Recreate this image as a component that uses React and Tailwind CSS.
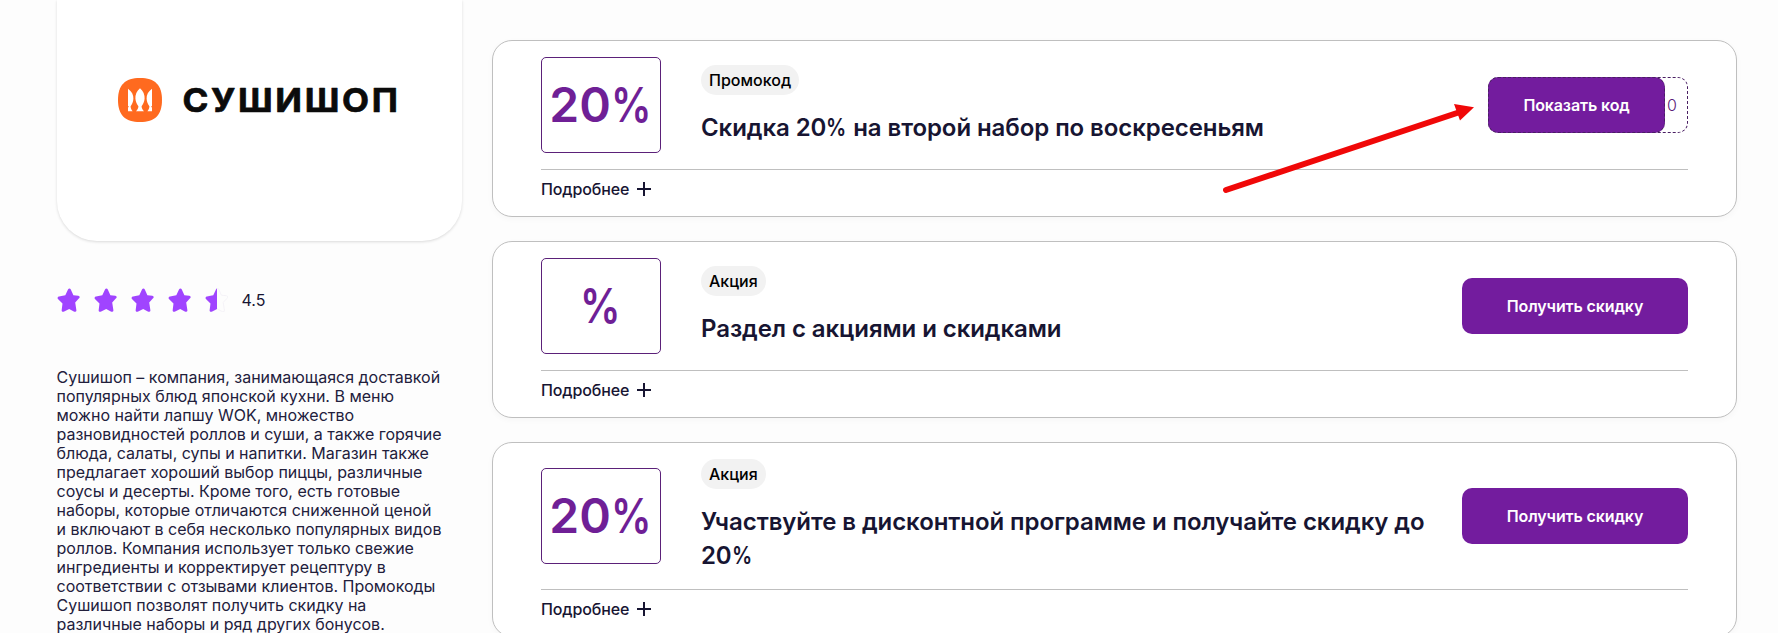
import React from "react";

const DESCRIPTION = [
  "Сушишоп – компания, занимающаяся доставкой",
  "популярных блюд японской кухни. В меню",
  "можно найти лапшу WOK, множество",
  "разновидностей роллов и суши, а также горячие",
  "блюда, салаты, супы и напитки. Магазин также",
  "предлагает хороший выбор пиццы, различные",
  "соусы и десерты. Кроме того, есть готовые",
  "наборы, которые отличаются сниженной ценой",
  "и включают в себя несколько популярных видов",
  "роллов. Компания использует только свежие",
  "ингредиенты и корректирует рецептуру в",
  "соответствии с отзывами клиентов. Промокоды",
  "Сушишоп позволят получить скидку на",
  "различные наборы и ряд других бонусов.",
];

const OFFERS = [
  { value: "20%", tag: "Промокод", title: "Скидка 20% на второй набор по воскресеньям", code: true },
  { value: "%", tag: "Акция", title: "Раздел с акциями и скидками" },
  { value: "20%", tag: "Акция", title: "Участвуйте в дисконтной программе и получайте скидку до 20%" },
];

const STAR =
  "M12.4 0.4 Q13.3 0.4 13.8 1.4 L16.4 7.2 L21.3 7.7 Q23 8 22.6 9.4 Q22.5 10 21.8 10.6 L18.2 14.4 L19.4 22.2 Q19.6 23.8 18 23.8 Q17.4 23.8 16.8 23.4 L12.2 20.9 L7.2 23.4 Q5.6 24.3 4.9 23.2 Q4.6 22.8 4.7 22.1 L5.5 15.6 L1.2 11.3 Q0.2 10.2 0.8 9.2 Q1 8.6 2 8.4 L8.3 7.3 L11 1.5 Q11.6 0.4 12.4 0.4 Z";

function Star({ half }) {
  return (
    <svg width="23" height="24" viewBox="0 0 23 24" className="block">
      {half ? (
        <>
          <path d={STAR} fill="#fdfdfd" stroke="#f3f0f6" strokeWidth="0.8" />
          <svg width="12" height="24" viewBox="0 0 12 24">
            <path d={STAR} fill="#a044ff" />
          </svg>
        </>
      ) : (
        <path d={STAR} fill="#a044ff" />
      )}
    </svg>
  );
}

function Logo() {
  return (
    <svg width="282" height="46" viewBox="0 0 282 46" className="block">
      <path
        d="M22 1 C37 1 44 8 44 23 C44 38 37 45 22 45 C7 45 0 38 0 23 C0 8 7 1 22 1 Z"
        fill="#ff6a1f"
      />
      <g fill="#ffffff">
        <path d="M22 11.3 C25.2 14 27 18 26.6 21.8 C26.3 25 25 27.5 23.6 29.2 C23.6 31 24.4 32.6 26 34.2 L18 34.2 C19.6 32.6 20.4 31 20.4 29.2 C19 27.5 17.7 25 17.4 21.8 C17 18 18.8 14 22 11.3 Z" />
        <path d="M10 11.8 C13.8 14.4 15.6 18 15.4 21.8 C15.2 25 14 27.6 12.6 29.2 C12.6 31 13.2 32.6 14.6 34.2 L10 34.2 L10 30.6 L11 29.8 L10 29 Z" />
        <path d="M34 11.8 C30.2 14.4 28.4 18 28.6 21.8 C28.8 25 30 27.6 31.4 29.2 C31.4 31 30.8 32.6 29.4 34.2 L34 34.2 L34 30.6 L33 29.8 L34 29 Z" />
      </g>
      <text
        x="64.5"
        y="34.5"
        textLength="218"
        lengthAdjust="spacingAndGlyphs"
        className="font-['Inter',sans-serif] text-[33px] font-bold tracking-[2.5px]"
        fill="#0b0b0b"
        stroke="#0b0b0b"
        strokeWidth="0.7"
        strokeLinejoin="round"
      >
        СУШИШОП
      </text>
    </svg>
  );
}

// Renders text with a condensed percent sign.
function Condensed({ children }) {
  const [before, after] = children.split("%");
  if (after === undefined) return children;
  return (
    <>
      {before}
      <span className="-mr-[0.13em] inline-block origin-left scale-x-[0.84]">%</span>
      {after}
    </>
  );
}

function Offer({ value, tag, title, code }) {
  return (
    <article className="rounded-[20px] border border-[#bfbfbf] bg-white px-12 shadow-[0_2px_6px_rgba(0,0,0,0.03)]">
      <div className="flex items-center border-b border-[#bfbfbf] py-4">
        <div className="flex h-24 w-[120px] shrink-0 items-center justify-center rounded-[5px] border border-[#5b2179] text-5xl font-semibold text-[#6f1f96]">
          <div>
            <Condensed>{value}</Condensed>
          </div>
        </div>
        <div className="ml-10 flex flex-1 flex-col items-start gap-4">
          <span className="flex h-[30px] items-center rounded-full bg-[#f2f2f2] px-2 text-base font-medium text-black">
            {tag}
          </span>
          <h2 className="text-2xl leading-[33.6px] font-semibold tracking-[-0.08px] text-[#171532]">
            <Condensed>{title}</Condensed>
          </h2>
        </div>
        {code ? (
          <div className="ml-6 flex h-14 w-[200px] shrink-0 rounded-[10px] border border-dashed border-[#4a1f63]">
            <button className="-my-px -ml-px w-[177px] rounded-[10px] border border-dashed border-[#4a1f63] bg-[#731c9e] text-base font-semibold tracking-[-0.12px] text-white">
              Показать код
            </button>
            <span className="flex items-center pl-0.5 text-base font-light text-[#5b2179]">0</span>
          </div>
        ) : (
          <button className="ml-6 h-14 w-[226px] shrink-0 rounded-[10px] bg-[#731c9e] text-base font-semibold tracking-[-0.12px] text-white">
            Получить скидку
          </button>
        )}
      </div>
      <div className="flex items-center gap-2 pt-2 pb-4 text-base leading-[22.4px] font-medium tracking-[-0.12px] text-[#171532]">
        Подробнее
        <svg width="14" height="14" viewBox="0 0 14 14">
          <path d="M7 0V14M0 7H14" stroke="#171532" strokeWidth="2" />
        </svg>
      </div>
    </article>
  );
}

export default function App() {
  return (
    <div className="relative flex h-[633px] w-[1778px] overflow-hidden bg-[#fdfdfd] font-['Inter',sans-serif] text-[#171532]">
      <aside className="ml-[56.5px] w-[405.5px] shrink-0">
        <div className="flex h-[241px] justify-center rounded-b-[40px] bg-white pt-[76.5px] shadow-[0_1px_3px_rgba(0,0,0,0.14)]">
          <Logo />
        </div>
        <div className="mt-[47px] flex h-6 items-center gap-3.5">
          <Star />
          <Star />
          <Star />
          <Star />
          <Star half />
          <span className="text-base">4.5</span>
        </div>
        <p className="mt-14 text-base leading-[19px] font-normal tracking-[-0.01px] whitespace-nowrap text-[#22203c]">
          {DESCRIPTION.map((line) => (
            <span key={line} className="block">
              {line}
            </span>
          ))}
        </p>
      </aside>
      <main className="mt-[39.6px] ml-[30px] flex w-[1245px] shrink-0 flex-col gap-6">
        {OFFERS.map((offer) => (
          <Offer key={offer.title} {...offer} />
        ))}
      </main>
      <svg className="absolute top-[95px] left-[1216px]" width="266" height="104" viewBox="0 0 266 104">
        <path d="M10 95 L244 17" stroke="#f00808" strokeWidth="6" strokeLinecap="round" />
        <path d="M258 12.3 L238 9 L244 25.5 Z" fill="#f00808" />
      </svg>
    </div>
  );
}
